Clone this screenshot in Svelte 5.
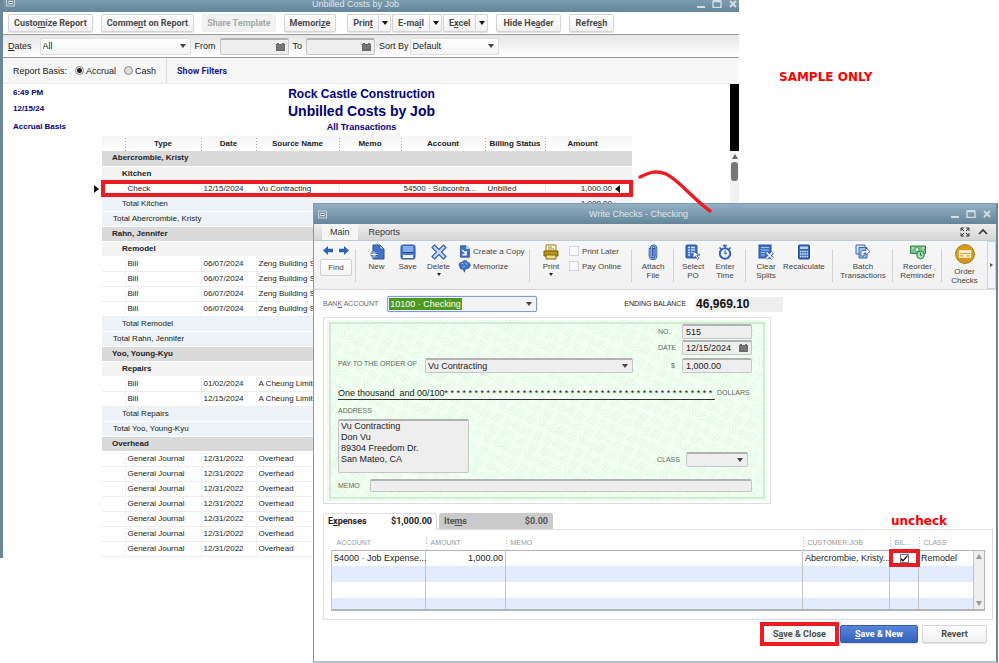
<script lang="ts">
  type Row = {
    kind: 'customer' | 'job' | 'line' | 'jobtotal' | 'total';
    text: string;
    date?: string;
    source?: string;
    account?: string;
    status?: string;
    amount?: string;
    current?: boolean;
  };

  const bill = (date: string, source: string): Row => ({ kind: 'line', text: 'Bill', date, source });
  const journal: Row = { kind: 'line', text: 'General Journal', date: '12/31/2022', source: 'Overhead' };

  const rows: Row[] = [
    { kind: 'customer', text: 'Abercrombie, Kristy' },
    { kind: 'job', text: 'Kitchen' },
    {
      kind: 'line',
      text: 'Check',
      date: '12/15/2024',
      source: 'Vu Contracting',
      account: '54500 · Subcontra...',
      status: 'Unbilled',
      amount: '1,000.00',
      current: true,
    },
    { kind: 'jobtotal', text: 'Total Kitchen', amount: '1,000.00' },
    { kind: 'total', text: 'Total Abercrombie, Kristy' },
    { kind: 'customer', text: 'Rahn, Jennifer' },
    { kind: 'job', text: 'Remodel' },
    bill('06/07/2024', 'Zeng Building Su'),
    bill('06/07/2024', 'Zeng Building Su'),
    bill('06/07/2024', 'Zeng Building Su'),
    bill('06/07/2024', 'Zeng Building Su'),
    { kind: 'jobtotal', text: 'Total Remodel' },
    { kind: 'total', text: 'Total Rahn, Jennifer' },
    { kind: 'customer', text: 'Yoo, Young-Kyu' },
    { kind: 'job', text: 'Repairs' },
    bill('01/02/2024', 'A Cheung Limite'),
    bill('12/15/2024', 'A Cheung Limite'),
    { kind: 'jobtotal', text: 'Total Repairs' },
    { kind: 'total', text: 'Total Yoo, Young-Kyu' },
    { kind: 'customer', text: 'Overhead' },
    ...Array(7).fill(journal),
  ];

  const headers = ['Type', 'Date', 'Source Name', 'Memo', 'Account', 'Billing Status', 'Amount'];

  let basis = $state('accrual');
  let fromDate = $state('');
  let toDate = $state('');
  let checkNo = $state('515');
  let checkDate = $state('12/15/2024');
  let checkAmount = $state('1,000.00');
  let address = $state('Vu Contracting\nDon Vu\n89304 Freedom Dr.\nSan Mateo, CA');
  let memo = $state('');
  let printLater = $state(false);
  let payOnline = $state(false);
  let billable = $state(true);

  const amountInWords = 'One thousand  and 00/100' + '* '.repeat(45).trim();
</script>

<!-- "_" stands before the access key -->
{#snippet key(label: string)}
  {@const i = label.indexOf('_')}
  {#if i < 0}{label}{:else}<span>{label.slice(0, i)}<u>{label[i + 1]}</u>{label.slice(i + 2)}</span>{/if}
{/snippet}

{#snippet calendar()}
  <svg class="cal" viewBox="0 0 9 8" aria-hidden="true">
    <path d="M0 1h1V0h2v1h3V0h2v1h1v7H0z" fill="#6a6a6a" />
    <path d="M1 3h7M1 5h7M3 2v5M6 2v5" stroke="#8c8c8c" stroke-width=".5" />
  </svg>
{/snippet}

{#snippet controls()}
  <div class="controls">
    <button aria-label="Minimize"><svg viewBox="0 0 10 8"><path d="M1 7h8" stroke="#d5dde2" stroke-width="2" /></svg></button>
    <button aria-label="Maximize"><svg viewBox="0 0 10 8"><path d="M1 1.5h8v6H1z" fill="none" stroke="#d5dde2" stroke-width="1.4" /><path d="M1 1h8" stroke="#d5dde2" stroke-width="2" /></svg></button>
    <button aria-label="Close"><svg viewBox="0 0 10 8"><path d="M2 1l6 6M8 1l-6 6" stroke="#d5dde2" stroke-width="2" /></svg></button>
  </div>
{/snippet}

{#snippet sysmenu()}
  <svg class="sysmenu" viewBox="0 0 9 9" aria-hidden="true">
    <rect x=".5" y="1" width="8" height="7" fill="#7d98a9" stroke="#c5d0d7" />
    <path d="M2.500 3h4v3h-4z" fill="#e8eef2" />
    <path d="M3 4.500h3" stroke="#4c6779" />
  </svg>
{/snippet}

{#snippet icon(name: string)}
  <svg class="icon" viewBox="0 0 16 16" aria-hidden="true">
    {#if name === 'new'}
      <path d="M4 1h7l4 4v10H4z" fill="#4273c4" stroke="#2b529c" />
      <path d="M11 1v4h4z" fill="#bcd3f5" stroke="#2b529c" stroke-width=".7" />
      <path d="M5 7v7M1.500 10.500h7M2.500 8l5 5M7.500 8l-5 5" stroke="#2b529c" stroke-width="2" />
      <path d="M5 7v7M1.500 10.500h7M2.500 8l5 5M7.500 8l-5 5" stroke="#dfeaff" stroke-width="1" />
    {:else if name === 'save'}
      <rect x="1" y="1" width="14" height="14" rx="2" fill="#4c80d2" stroke="#2b529c" />
      <path d="M3 2h10v6H3z" fill="#86aeea" />
      <path d="M2 8.500h12" stroke="#244a91" />
      <path d="M3 11h10v3H3z" fill="#eff5ff" />
    {:else if name === 'delete'}
      <path d="M1 3.500L3.500 1 8 5.500 12.500 1 15 3.500 10.500 8l4.500 4.500-2.500 2.500L8 10.500 3.500 15 1 12.500 5.500 8z" fill="#c9dcf6" stroke="#3565b5" stroke-width="1.200" stroke-linejoin="round" />
    {:else if name === 'copy'}
      <path d="M3 1h7l4 4v10H3z" fill="#4273c4" stroke="#2b529c" />
      <path d="M10 1v4h4z" fill="#c6daf7" />
      <path d="M5 6l5 5M10 7.500V12H5.500" stroke="#fff" stroke-width="1.600" fill="none" />
    {:else if name === 'memorize'}
      <path d="M2 8c-2-3 1-6 3-5 1-3 6-3 7 0 3 0 4 4 2 6-1 2-3 2-5 2l-1 4-2-4c-2 1-4-1-4-3z" fill="#3e70c5" stroke="#27498e" stroke-width=".7" />
      <path d="M4 5c1-1 2-1 3 0M8 4c2-1 3 0 3 2M5 8c1 1 3 1 4-1" stroke="#a9c6f3" fill="none" />
    {:else if name === 'print'}
      <path d="M3 1h10v6H3z" fill="#fffbe4" stroke="#9b7d12" />
      <path d="M5 3h4M5 5h6" stroke="#a98d2a" />
      <path d="M1 7h14v5H1z" fill="#b99318" stroke="#7c610a" />
      <path d="M3 11h10v4H3z" fill="#f0dc8c" stroke="#846a12" />
    {:else if name === 'attach'}
      <path d="M5 5v7a3 3 0 0 0 6 0V4a2.200 2.200 0 0 0-4.500 0v7.500a1.200 1.200 0 0 0 2.500 0V5" fill="none" stroke="#2b529c" stroke-width="2.600" stroke-linecap="round" />
      <path d="M5 5v7a3 3 0 0 0 6 0V4a2.200 2.200 0 0 0-4.500 0v7.500a1.200 1.200 0 0 0 2.500 0V5" fill="none" stroke="#86aee8" stroke-width="1.200" />
    {:else if name === 'select'}
      <rect x="1" y="1" width="11" height="13" rx="1" fill="#3f70c4" stroke="#2b529c" />
      <path d="M3 3.500h2M6 3.500h4M3 6h2M6 6h4M3 8.500h2M6 8.500h2M3 11h2" stroke="#c9dcfa" stroke-width="1.300" />
      <path d="M8 7l7 4-3 .5 2 3-1.500 1-2-3L8 14z" fill="#e6effd" stroke="#2b529c" stroke-width=".8" />
    {:else if name === 'timer'}
      <circle cx="8" cy="9.500" r="5.200" fill="#e5effc" stroke="#3263b6" stroke-width="2" />
      <path d="M6 1.500h4M8 1v3M2.500 3.500l2 2M13.500 3.500l-2 2" stroke="#3263b6" stroke-width="1.600" />
      <path d="M8 6.500v3.500l2-1" stroke="#27498e" fill="none" />
    {:else if name === 'clear'}
      <rect x="1" y="1" width="12" height="13" fill="#3f70c4" stroke="#2b529c" />
      <path d="M3 3.500h8M3 6h8M3 8.500h4M3 11h4" stroke="#9dbff0" />
      <path d="M8.500 8.500l6 6M14.500 8.500l-6 6" stroke="#2b529c" stroke-width="3.400" />
      <path d="M8.500 8.500l6 6M14.500 8.500l-6 6" stroke="#dbe8fc" stroke-width="1.800" />
    {:else if name === 'calc'}
      <rect x="2.500" y="1" width="11" height="14" rx="1" fill="#3768bd" stroke="#27498e" />
      <path d="M4 2.500h8v2.500H4z" fill="#b9d1f7" />
      <path d="M4 7.500h8M4 10h8M4 12.500h8" stroke="#dbe8fc" stroke-width="1.500" stroke-dasharray="1.500 .7" />
    {:else if name === 'batch'}
      <path d="M1 1h9v9H1z" fill="#d8e5f8" stroke="#3c68b2" />
      <path d="M4 3.500h8V14H4z" fill="#9dbdec" stroke="#3c68b2" />
      <path d="M6 12V8.500c0-1 1-2 2-2h3V4l4 3.500-4 3.500V9H9v3z" fill="#f3f8ff" stroke="#2b529c" stroke-width=".8" />
    {:else if name === 'reorder'}
      <path d="M.5 2h15v7.500H.5z" fill="#7cc18a" stroke="#2f8745" />
      <circle cx="7" cy="5.500" r="2" fill="#e4f7e7" stroke="#2f8745" stroke-width=".7" />
      <path d="M2 4h2M12 4h2" stroke="#e4f7e7" />
      <circle cx="10.500" cy="11" r="3.800" fill="#a9dab2" stroke="#2f8745" />
      <path d="M10.500 8.800V11l1.500 1" stroke="#1f6731" fill="none" />
    {:else if name === 'order'}
      <circle cx="8" cy="8" r="7.500" fill="#d99a1c" stroke="#a87211" stroke-width=".8" />
      <rect x="3" y="5" width="10" height="6" rx=".6" fill="#fff6dc" />
      <path d="M4 7.500h8M4 9.500h3M9 9.500h3" stroke="#cf9320" stroke-width=".8" />
    {/if}
  </svg>
{/snippet}

{#snippet tool(name: string, lines: string[])}
  <button class="tool">
    {@render icon(name)}
    {#each lines as line}<span>{line}</span>{/each}
  </button>
{/snippet}

<div class="desktop">
  <section class="window report">
    <header class="titlebar">
      {@render sysmenu()}
      <h2>Unbilled Costs by Job</h2>
      {@render controls()}
    </header>

    <div class="buttons">
      <button class="btn">{@render key('Custo_mize Report')}</button>
      <button class="btn">{@render key('Comme_nt on Report')}</button>
      <button class="btn share" disabled>Share Template</button>
      <button class="btn">{@render key('Memori_ze')}</button>
      <div class="menus">
        {#each ['Prin_t', 'E-ma_il', 'E_xcel'] as label}
          <div class="split">
            <button class="btn">{@render key(label)}</button>
            <button class="btn drop" aria-label="More options"><i class="caret"></i></button>
          </div>
        {/each}
      </div>
      <button class="btn wide">{@render key('Hide He_ader')}</button>
      <button class="btn wide">{@render key('Refre_sh')}</button>
    </div>

    <div class="filters">
      <label for="dates">{@render key('_Dates')}</label>
      <div class="pick dates">
        <select id="dates"><option>All</option></select>
        <i class="caret"></i>
      </div>
      <label for="from">From</label>
      <div class="field date"><input id="from" bind:value={fromDate} />{@render calendar()}</div>
      <label for="to">To</label>
      <div class="field date"><input id="to" bind:value={toDate} />{@render calendar()}</div>
      <div class="sort">
        <label for="sort">Sort By</label>
        <div class="pick">
          <select id="sort"><option>Default</option></select>
          <i class="caret"></i>
        </div>
      </div>
    </div>

    <div class="basis">
      <div class="basis-options">
        <span>Report Basis:</span>
        <label><input type="radio" name="basis" value="accrual" bind:group={basis} />Accrual</label>
        <label><input type="radio" name="basis" value="cash" bind:group={basis} />Cash</label>
      </div>
      <a href="#filters">Show Filters</a>
    </div>

    <div class="sheet">
      <div class="paper">
        <div class="heading">
          <div class="stamp">
            <span>6:49 PM</span>
            <span>12/15/24</span>
            <span>Accrual Basis</span>
          </div>
          <div class="titles">
            <h3>Rock Castle Construction</h3>
            <h1>Unbilled Costs by Job</h1>
            <h4>All Transactions</h4>
          </div>
        </div>

        <table class="costs">
          <colgroup>
            <col class="c-indent" /><col class="c-type" /><col class="c-date" /><col class="c-source" />
            <col class="c-memo" /><col class="c-account" /><col class="c-status" /><col />
          </colgroup>
          <thead>
            <tr>
              <th></th>
              {#each headers as header}<th>{header}</th>{/each}
            </tr>
          </thead>
          <tbody>
            {#each rows as row}
              {#if row.kind === 'line'}
                <tr class="line" class:current={row.current}>
                  <td>{#if row.current}<i class="mark start"></i>{/if}</td>
                  <td>{row.text}</td>
                  <td>{row.date}</td>
                  <td>{row.source}</td>
                  <td></td>
                  <td>{row.account}</td>
                  <td>{row.status}</td>
                  <td class="amount">{row.amount}{#if row.current}<i class="mark end"></i>{/if}</td>
                </tr>
              {:else}
                <tr class={row.kind}>
                  <td colspan="7">{row.text}</td>
                  <td class="amount">{row.amount}</td>
                </tr>
              {/if}
            {/each}
          </tbody>
        </table>
      </div>
      <div class="rail">
        <div class="black"></div>
        <i class="up"></i>
        <div class="thumb"></div>
      </div>
    </div>
  </section>

  <section class="window checks">
    <header class="titlebar">
      {@render sysmenu()}
      <h2>Write Checks - Checking</h2>
      {@render controls()}
    </header>

    <nav class="ribbon-tabs">
      <button class="active">Main</button>
      <button>Reports</button>
      <div class="ribbon-actions">
        <button aria-label="Expand">
          <svg viewBox="0 0 10 10"><path d="M1 4V1h3M6 1h3v3M9 6v3H6M4 9H1V6M1 1l3 3M9 1L6 4M9 9L6 6M1 9l3-3" fill="none" stroke="#333" /></svg>
        </button>
        <button aria-label="Collapse">
          <svg viewBox="0 0 10 10"><path d="M1 7l4-4 4 4" fill="none" stroke="#333" stroke-width="1.600" /></svg>
        </button>
      </div>
    </nav>

    <div class="ribbon">
      <div class="group nav">
        <div class="arrows">
          <button aria-label="Previous"><svg viewBox="0 0 10 9"><path d="M0 4.500L5 0v2.800h5v3.400H5V9z" fill="#2f62b8" /></svg></button>
          <button aria-label="Next"><svg viewBox="0 0 10 9"><path d="M10 4.500L5 0v2.800H0v3.400h5V9z" fill="#2f62b8" /></svg></button>
        </div>
        <button class="find">Find</button>
      </div>
      <div class="group edit">
        {@render tool('new', ['New'])}
        {@render tool('save', ['Save'])}
        <button class="tool">{@render icon('delete')}<span>Delete</span><i class="caret"></i></button>
        <div class="stack">
          <button class="inline">{@render icon('copy')}Create a Copy</button>
          <button class="inline">{@render icon('memorize')}Memorize</button>
        </div>
      </div>
      <div class="group print">
        <button class="tool">{@render icon('print')}<span>Print</span><i class="caret"></i></button>
        <div class="stack">
          <label><input type="checkbox" bind:checked={printLater} />Print Later</label>
          <label><input type="checkbox" bind:checked={payOnline} />Pay Online</label>
        </div>
      </div>
      <div class="group attach">{@render tool('attach', ['Attach', 'File'])}</div>
      <div class="group po">
        {@render tool('select', ['Select', 'PO'])}
        {@render tool('timer', ['Enter', 'Time'])}
      </div>
      <div class="group splits">
        {@render tool('clear', ['Clear', 'Splits'])}
        {@render tool('calc', ['Recalculate'])}
      </div>
      <div class="group batch">{@render tool('batch', ['Batch', 'Transactions'])}</div>
      <div class="group reorder">{@render tool('reorder', ['Reorder', 'Reminder'])}</div>
      <div class="group order">{@render tool('order', ['Order', 'Checks'])}</div>
      <button class="more" aria-label="More tools"><i></i></button>
    </div>

    <div class="body">
      <div class="bank">
        <label class="caps" for="bank">{@render key('BAN_K ACCOUNT')}</label>
        <div class="pick account">
          <span class="selected">10100 · Checking</span>
          <select id="bank" aria-label="Bank account"><option label=" "></option></select>
          <i class="caret"></i>
        </div>
        <span class="caps ending">ENDING BALANCE</span>
        <output>46,969.10</output>
      </div>

      <div class="check">
        <div class="check-face">
          <svg class="pattern" aria-hidden="true">
            <defs>
              <pattern id="weave" width="44" height="36" patternUnits="userSpaceOnUse" patternTransform="rotate(24)">
                <rect width="44" height="36" fill="#f0fff0" />
                <path
                  d="M1 9l8-7M2 12l9-8M5 13l7-6M14 2l4 9M17 1l4 10M20 1l3 8M25 10l8-5M25 7l7-5M28 12l8-5M37 1l-2 10M40 1l-2 11M43 2l-2 9M3 17l9 3M2 20l9 3M1 23l9 3M15 24l4-10M18 25l4-10M21 25l3-9M26 16l8 7M28 14l8 7M26 20l6 5M38 23l5-8M36 22l4-8M41 25l3-6M2 35l6-7M5 35l6-8M8 36l5-6M16 28l9 2M15 31l9 2M16 34l9 2M29 35l2-9M32 36l2-9M35 35l2-8M39 28l5 6M38 31l4 4"
                  stroke="#def7e1" fill="none" />
              </pattern>
            </defs>
            <rect width="100%" height="100%" fill="url(#weave)" />
          </svg>

          <div class="check-form">
            <div class="pair no">
              <label class="caps" for="no">NO.</label>
              <div class="field"><input id="no" bind:value={checkNo} /></div>
            </div>
            <div class="pair">
              <label class="caps" for="date">DATE</label>
              <div class="field"><input id="date" bind:value={checkDate} />{@render calendar()}</div>
            </div>
            <div class="payee">
              <label class="caps" for="payee">PAY TO THE ORDER OF</label>
              <div class="pick flat">
                <select id="payee"><option>Vu Contracting</option></select>
                <i class="caret"></i>
              </div>
              <div class="pair">
                <label class="caps dollar" for="amount">$</label>
                <div class="field"><input id="amount" bind:value={checkAmount} /></div>
              </div>
            </div>
            <div class="words">
              <p>{amountInWords}</p>
              <span class="caps">DOLLARS</span>
            </div>
            <label class="caps address-label" for="address">ADDRESS</label>
            <div class="address">
              <textarea id="address" bind:value={address}></textarea>
              <div class="class">
                <label class="caps" for="class">CLASS</label>
                <div class="pick flat">
                  <select id="class"><option label=" "></option></select>
                  <i class="caret"></i>
                </div>
              </div>
            </div>
            <div class="memo">
              <label class="caps" for="memo">MEMO</label>
              <div class="field"><input id="memo" bind:value={memo} /></div>
            </div>
          </div>
        </div>
      </div>

      <div class="detail-tabs">
        <button class="active">{@render key('E_xpenses')}<span>$1,000.00</span></button>
        <button>{@render key('Ite_ms')}<span>$0.00</span></button>
      </div>

      <div class="detail">
        <table>
          <colgroup>
            <col class="d-account" /><col class="d-amount" /><col /><col class="d-customer" />
            <col class="d-bill" /><col class="d-class" /><col class="d-rail" />
          </colgroup>
          <thead>
            <tr>
              {#each ['ACCOUNT', 'AMOUNT', 'MEMO', 'CUSTOMER:JOB', 'BIL...', 'CLASS'] as header}
                <th>{header}</th>
              {/each}
              <th></th>
            </tr>
          </thead>
          <tbody>
            <tr>
              <td>54000 · Job Expense...</td>
              <td class="amount">1,000.00</td>
              <td></td>
              <td>Abercrombie, Kristy...</td>
              <td class="billable"><input type="checkbox" aria-label="Billable" bind:checked={billable} /></td>
              <td>Remodel</td>
              <td class="scroll" rowspan="4"><div><i class="up"></i><i class="down"></i></div></td>
            </tr>
            {#each Array(3) as _}
              <tr>
                {#each Array(6) as _}<td></td>{/each}
              </tr>
            {/each}
          </tbody>
        </table>
      </div>

      <footer>
        <button class="btn boxed">{@render key('S_ave & Close')}</button>
        <button class="btn primary">{@render key('_Save & New')}</button>
        <button class="btn">Revert</button>
      </footer>
    </div>
  </section>

  <p class="note sample">SAMPLE ONLY</p>
  <p class="note uncheck">uncheck</p>
  <svg class="swoosh" viewBox="0 0 80 48" aria-hidden="true">
    <path d="M4 10C14 5 21 3 30 7C43 13 56 31 74 44" fill="none" stroke="#ed1c24" stroke-width="3.500" stroke-linecap="round" />
  </svg>
</div>

<style>
  :global(body) {
    margin: 0;
    background: #fff;
  }

  .desktop {
    position: relative;
    min-height: 100vh;
    overflow: hidden;
    font: 9px/12px 'Liberation Sans', Arial, sans-serif;
    color: #222;
  }

  .desktop * {
    box-sizing: border-box;
  }

  button,
  input,
  select,
  textarea {
    font: inherit;
    color: inherit;
    margin: 0;
    padding: 0;
    border: 0;
    background: none;
    border-radius: 0;
    outline: none;
  }

  select {
    appearance: none;
  }

  h1,
  h2,
  h3,
  h4,
  p {
    margin: 0;
  }

  .window {
    position: absolute;
    background: #fff;
  }

  .report {
    top: 0;
    left: 0;
    right: 260px;
    border-left: 3px solid #6b8799;
  }

  .checks {
    top: 203px;
    left: 313px;
    right: 1px;
    border: 1px solid #7f9bad;
    border-right: 2px solid #6b8799;
    border-bottom: 2px solid #b3c3ce;
  }

  .titlebar {
    display: flex;
    align-items: center;
    height: 20px;
    padding: 0 4px;
    background: linear-gradient(#93b0c3, #64859a);
    color: #dfe8ee;
  }

  .titlebar h2 {
    flex: 1;
    text-align: center;
    font-size: 9px;
    font-weight: 400;
  }

  .report .titlebar {
    align-items: flex-start;
    height: 12px;
    padding: 0 1px 0 3px;
    background: linear-gradient(#7d9cb0, #64859a);
  }

  .report .titlebar h2 {
    line-height: 9px;
  }

  .report .sysmenu {
    margin-top: -2px;
  }

  .sysmenu {
    width: 9px;
    height: 9px;
  }

  .controls {
    display: flex;
    gap: 6px;
  }

  .controls button,
  .controls svg {
    display: block;
    width: 10px;
    height: 8px;
  }

  .caret {
    width: 0;
    height: 0;
    border: 3px solid transparent;
    border-top: 4px solid #444;
    border-bottom: 0;
  }

  .btn {
    height: 18px;
    padding: 0 5px;
    border: 1px solid #d4d4d4;
    border-radius: 2px;
    background: linear-gradient(#fff, #f1f1f1);
    box-shadow: 0 1px 1px #e2e2e2;
    font: bold 9px/14px Roboto, 'Liberation Sans', sans-serif;
    color: #4b4b4b;
    white-space: nowrap;
  }

  .buttons {
    display: flex;
    align-items: center;
    gap: 8px;
    height: 23px;
    padding: 0 5px;
    border-bottom: 1px solid #999;
  }

  .buttons .share {
    padding: 0 4px;
    border-color: #eee;
    background: #f2f2f2;
    box-shadow: none;
    color: #a8a8a8;
  }

  .buttons .wide {
    padding: 0 6px;
  }

  .menus {
    display: flex;
    gap: 1px;
    margin-left: 3px;
  }

  .split {
    display: flex;
  }

  .split .btn:first-child {
    border-radius: 2px 0 0 2px;
    border-right: 0;
  }

  .split .drop {
    width: 13px;
    padding: 0 3px;
    border-radius: 0 2px 2px 0;
  }

  .drop .caret {
    display: block;
    border-top-color: #111;
  }

  .filters {
    display: flex;
    align-items: center;
    gap: 4px;
    height: 23px;
    padding: 0 5px;
    border-bottom: 1px solid #999;
    background: linear-gradient(#e6e6e6, #fff);
  }

  .pick {
    position: relative;
    display: flex;
    align-items: center;
    height: 17px;
    border: 1px solid #ddd;
    border-radius: 2px;
    background: linear-gradient(#fff, #f4f4f4);
  }

  .pick select {
    width: 100%;
    height: 100%;
    padding-left: 2px;
  }

  .pick .caret {
    position: absolute;
    right: 4px;
    pointer-events: none;
  }

  .dates {
    width: 151px;
    margin-left: 4px;
  }

  .sort {
    display: flex;
    align-items: center;
    gap: 1px;
  }

  .sort .pick {
    width: 89px;
  }

  .field {
    display: flex;
    align-items: center;
    height: 15px;
    padding: 0 3px;
    border: 1px solid #c6c6c6;
    border-top: 2px solid #b2b2b2;
    border-radius: 2px;
    background: #eee;
  }

  .field input {
    flex: 1;
    width: 0;
    min-width: 0;
    height: 100%;
  }

  .cal {
    width: 9px;
    height: 8px;
  }

  .date {
    width: 69px;
    height: 17px;
  }

  .basis {
    display: flex;
    align-items: stretch;
    height: 26px;
    border-bottom: 1px solid #eee;
    background: #f7f7f7;
  }

  .basis-options {
    display: flex;
    align-items: center;
    gap: 8px;
    padding: 0 10px;
    border-right: 1px solid #ddd;
  }

  .basis label {
    display: flex;
    align-items: center;
    gap: 2px;
  }

  .basis input {
    appearance: none;
    width: 9px;
    height: 9px;
    border: 1px solid #8a8a8a;
    border-radius: 50%;
    background: #ddd;
  }

  .basis input:checked {
    background: radial-gradient(#222 2px, #eee 3px);
  }

  .basis a {
    align-self: center;
    padding-left: 10px;
    font: bold 9px/12px Roboto, 'Liberation Sans', sans-serif;
    color: #1c1c8c;
    text-decoration: none;
  }

  .sheet {
    display: flex;
    font-size: 8px;
  }

  .paper {
    flex: 1;
    min-width: 0;
    padding-bottom: 1px;
  }

  .heading {
    display: grid;
    grid-template-columns: 1fr auto 1fr;
    height: 52px;
    padding: 3px 20px 0 10px;
    font-weight: bold;
    color: #000080;
  }

  .stamp {
    display: flex;
    flex-direction: column;
    gap: 4px;
  }

  .stamp span:last-child {
    margin-top: 2px;
  }

  .titles {
    text-align: center;
  }

  .titles h3 {
    font-size: 12px;
    line-height: 15px;
  }

  .titles h1 {
    font-size: 14px;
    line-height: 18px;
  }

  .titles h4 {
    font-size: 9px;
    line-height: 14px;
  }

  .costs {
    width: 530px;
    margin-left: 99px;
    table-layout: fixed;
    border-collapse: collapse;
  }

  .c-indent {
    width: 23px;
  }

  .c-type {
    width: 76px;
  }

  .c-date {
    width: 55px;
  }

  .c-source {
    width: 83px;
  }

  .c-memo {
    width: 62px;
  }

  .c-account {
    width: 84px;
  }

  .c-status {
    width: 60px;
  }

  .costs th {
    height: 15px;
    padding: 0;
    background:
      linear-gradient(#aaa 1px, transparent 1px) left 5px / 1px 3px repeat-y,
      linear-gradient(#f4f4f4, #fff);
    font-weight: bold;
    color: #222;
    white-space: nowrap;
  }

  .costs th:first-child {
    background: linear-gradient(#f4f4f4, #fff);
  }

  .costs th:last-child {
    padding-right: 12px;
  }

  .costs td {
    height: 15px;
    padding: 0 2px;
    border-bottom: 1px solid #fff;
    line-height: 12px;
    white-space: nowrap;
  }

  .costs .customer td {
    padding-left: 10px;
    background: #dadada;
    font-weight: bold;
  }

  .costs .job td {
    padding-left: 20px;
    background: #f4f4f4;
    font-weight: bold;
  }

  .costs .jobtotal td {
    padding-left: 20px;
    background: #edf3f7;
  }

  .costs .total td {
    padding-left: 11px;
    background: #edf3f7;
  }

  .costs .line td {
    border-bottom-color: #eee;
  }

  .costs .line td:not(:first-child) {
    border-left: 1px solid #f0f0f0;
  }

  .costs td.amount {
    position: relative;
    padding-right: 20px;
    text-align: right;
  }

  .costs .current {
    position: relative;
    outline: 4px solid #ed1c24;
    outline-offset: -3px;
  }

  .mark {
    position: absolute;
    top: 4px;
    border: 4px solid transparent;
  }

  .mark.start {
    left: -8px;
    border-left: 5px solid #111;
    border-right: 0;
  }

  .mark.end {
    top: 3px;
    right: 12px;
    border-right: 5px solid #111;
    border-left: 0;
  }

  .rail {
    display: flex;
    flex-direction: column;
    align-items: center;
    gap: 3px;
    width: 9px;
    background: #f1f1f1;
  }

  .black {
    width: 100%;
    height: 67px;
    background: #000;
  }

  .up {
    border: 3px solid transparent;
    border-bottom: 5px solid #666;
    border-top: 0;
  }

  .down {
    border: 3px solid transparent;
    border-top: 5px solid #666;
    border-bottom: 0;
  }

  .thumb {
    width: 7px;
    height: 19px;
    border-radius: 3px;
    background: #777;
  }

  .ribbon-tabs {
    display: flex;
    align-items: flex-end;
    height: 17px;
    padding: 0 8px;
    border-bottom: 1px solid #bccbd5;
    background: linear-gradient(#ededed, #d5d5d5);
    color: #333;
  }

  .ribbon-tabs > button {
    height: 16px;
    padding: 0 11px;
  }

  .ribbon-tabs > .active {
    padding: 0 8px;
    border-radius: 2px 2px 0 0;
    background: #f6f6f6;
  }

  .ribbon-actions {
    display: flex;
    align-self: center;
    gap: 8px;
    margin-left: auto;
  }

  .ribbon-actions button,
  .ribbon-actions svg {
    display: block;
    width: 10px;
    height: 10px;
  }

  .ribbon {
    display: flex;
    height: 49px;
    padding-left: 2px;
    border-bottom: 1px solid #d8d8d8;
    background: linear-gradient(#f7f7f7, #f1f1f1);
    font-size: 8px;
    line-height: 9px;
    color: #444;
  }

  .group {
    display: flex;
    align-items: flex-start;
    padding-top: 3px;
    background: linear-gradient(#d2d2d2, #d2d2d2) right center / 1px 33px no-repeat;
  }

  .nav {
    flex-direction: column;
    gap: 4px;
    width: 40px;
    padding: 5px 4px 0;
  }

  .edit {
    width: 174px;
    padding-left: 5px;
  }

  .edit .tool {
    width: 31px;
  }

  .edit .stack {
    margin-left: 4px;
  }

  .print {
    width: 102px;
    padding-left: 6px;
  }

  .print .stack {
    margin-left: 3px;
  }

  .attach {
    justify-content: center;
    width: 42px;
  }

  .po {
    gap: 2px;
    width: 72px;
    padding-left: 4px;
  }

  .splits {
    gap: 2px;
    width: 87px;
    padding-left: 5px;
  }

  .batch {
    justify-content: center;
    width: 60px;
  }

  .reorder {
    justify-content: center;
    width: 49px;
  }

  .order {
    flex: 1;
    justify-content: center;
    background: none;
  }

  .arrows {
    display: flex;
    justify-content: space-around;
    width: 100%;
  }

  .arrows button,
  .arrows svg {
    display: block;
    width: 10px;
    height: 9px;
  }

  .find {
    width: 32px;
    height: 17px;
    border: 1px solid #d0d0d0;
    border-radius: 2px;
    background: linear-gradient(#fff, #f3f3f3);
  }

  .tool {
    display: flex;
    flex-direction: column;
    align-items: center;
    min-width: 30px;
    line-height: 9px;
    white-space: nowrap;
  }

  .icon {
    width: 16px;
    height: 16px;
  }

  .tool .icon {
    margin-bottom: 2px;
  }

  .order .icon {
    width: 20px;
    height: 20px;
    margin-bottom: 3px;
  }

  .tool .caret {
    margin-top: 2px;
    border-width: 3px 2px 0;
    border-top-color: #222;
  }

  .stack {
    display: flex;
    flex-direction: column;
    gap: 1px;
  }

  .inline {
    display: flex;
    align-items: center;
    gap: 2px;
    height: 14px;
    white-space: nowrap;
  }

  .inline .icon {
    width: 13px;
    height: 13px;
  }

  .stack label {
    display: flex;
    align-items: center;
    gap: 3px;
    height: 14px;
    white-space: nowrap;
  }

  .stack input {
    appearance: none;
    width: 10px;
    height: 10px;
    border: 1px solid #cdd3e4;
    background: #f8f9fd;
  }

  .stack input:checked {
    background: #4273c4;
  }

  .more {
    display: flex;
    align-items: center;
    justify-content: center;
    width: 9px;
    border: 1px solid #c5d7e6;
    background: #f2f6fa;
  }

  .more i {
    border: 2px solid transparent;
    border-left: 3px solid #555;
    border-right: 0;
  }

  .body {
    padding: 6px 3px 18px 9px;
  }

  .caps {
    font-size: 7px;
    line-height: 12px;
    color: #666;
    white-space: nowrap;
  }

  .bank {
    display: flex;
    align-items: center;
    height: 16px;
    margin-bottom: 5px;
  }

  .account {
    width: 150px;
    height: 16px;
    margin-left: 9px;
    padding-left: 1px;
    border: 1px solid #7d9fd6;
    background: #f3f3f3;
    box-shadow: 0 0 1px #7d9fd6;
  }

  .selected {
    padding: 0 1px;
    background: #4e9a1e;
    color: #fff;
    white-space: nowrap;
  }

  .account select {
    flex: 1;
    width: 0;
  }

  .ending {
    margin-left: 87px;
    color: #222;
  }

  output {
    width: 88px;
    height: 15px;
    margin-left: 9px;
    padding-left: 1px;
    background: #eee;
    font: bold 12px/15px 'Liberation Sans', Arial, sans-serif;
    color: #111;
  }

  .check {
    width: 448px;
    padding: 2px 3px;
    border: 1px solid #ddd;
  }

  .check-face {
    position: relative;
    padding: 2px;
  }

  .pattern {
    position: absolute;
    inset: 0;
    width: 100%;
    height: 100%;
  }

  .check-form {
    position: relative;
    display: flex;
    flex-direction: column;
    padding: 0 11px 5px 7px;
    border: 2px solid #d3ead5;
  }

  .check-form .caps {
    color: #5f6b60;
  }

  .pair {
    display: grid;
    grid-template-columns: 24px 70px;
    align-self: flex-end;
    align-items: center;
  }

  .pair .dollar {
    padding-left: 13px;
  }

  .no {
    margin-bottom: 1px;
  }

  .flat {
    height: 15px;
    border: 1px solid #c6c6c6;
    border-top: 2px solid #b2b2b2;
    background: #eee;
  }

  .payee {
    display: grid;
    grid-template-columns: 87px 208px 1fr;
    margin-top: 3px;
  }

  .payee .pair {
    justify-self: end;
  }

  .words {
    display: flex;
    gap: 2px;
    margin-top: 14px;
  }

  .words p {
    width: 377px;
    overflow: hidden;
    border-bottom: 1px solid #333;
    white-space: pre;
  }

  .address-label {
    margin-top: 5px;
  }

  .address {
    display: flex;
    align-items: flex-end;
    justify-content: space-between;
    margin-top: 2px;
  }

  textarea {
    width: 131px;
    height: 54px;
    padding: 0 2px;
    border: 1px solid #c6c6c6;
    border-top: 2px solid #b2b2b2;
    border-radius: 2px;
    background: #eee;
    line-height: 11px;
    resize: none;
  }

  .class {
    display: grid;
    grid-template-columns: 29px 62px;
    align-items: center;
    margin: 0 4px 6px 0;
  }

  .memo {
    display: grid;
    grid-template-columns: 32px 1fr;
    align-items: center;
    margin-top: 6px;
  }

  .memo .field {
    height: 13px;
  }

  .detail-tabs {
    display: flex;
    gap: 2px;
    margin-top: 9px;
  }

  .detail-tabs button {
    display: flex;
    justify-content: space-between;
    width: 114px;
    height: 16px;
    padding: 2px 5px;
    border-radius: 3px 3px 0 0;
    background: #cacaca;
    color: #555;
    font: bold 9px/12px Roboto, 'Liberation Sans', sans-serif;
  }

  .detail-tabs .active {
    position: relative;
    height: 17px;
    margin-bottom: -1px;
    padding: 1px 4px;
    border: 1px solid #ddd;
    border-bottom: 0;
    background: #fff;
    color: #222;
  }

  .detail {
    padding: 7px 7px 8px;
    border: 1px solid #ddd;
  }

  .detail table {
    width: 100%;
    table-layout: fixed;
    border-collapse: collapse;
  }

  .d-account {
    width: 94px;
  }

  .d-amount {
    width: 80px;
  }

  .d-customer {
    width: 87px;
  }

  .d-bill {
    width: 29px;
  }

  .d-class {
    width: 55px;
  }

  .d-rail {
    width: 11px;
  }

  .detail th {
    height: 13px;
    padding: 0 0 0 5px;
    font-size: 7px;
    font-weight: 400;
    line-height: 12px;
    text-align: left;
    color: #999;
    background: linear-gradient(#bbb 1px, transparent 1px) left 3px / 1px 3px repeat-y;
  }

  .detail th:first-child,
  .detail th:last-child {
    background: none;
  }

  .detail tbody {
    border: 1px solid #b5b5b5;
    border-bottom-width: 2px;
  }

  .detail td {
    height: 16px;
    padding: 0 2px;
    border-left: 1px solid #c3c3c3;
    line-height: 12px;
    white-space: nowrap;
  }

  .detail tr:last-child td {
    height: 12px;
  }

  .detail tbody tr:nth-child(even) {
    background: #e1edfd;
  }

  .detail td.amount {
    text-align: right;
  }

  .detail td.billable {
    text-align: center;
    outline: 4px solid #ed1c24;
    outline-offset: -3px;
  }

  .billable input {
    appearance: none;
    display: block;
    width: 9px;
    height: 9px;
    margin: 0 auto;
    border: 1px solid #777;
    background: #fff;
  }

  .billable input:checked::before {
    content: '';
    display: block;
    width: 7px;
    height: 7px;
    background: #111;
    clip-path: polygon(0 40%, 35% 70%, 100% 0, 100% 30%, 35% 100%, 0 70%);
  }

  .detail td.scroll {
    padding: 0;
    background: #eee;
  }

  .scroll div {
    display: flex;
    flex-direction: column;
    align-items: center;
    justify-content: space-between;
    height: 52px;
  }

  .scroll .up {
    border-bottom-color: #999;
  }

  .scroll .down {
    border-top-color: #999;
  }

  footer {
    display: flex;
    justify-content: flex-end;
    gap: 4px;
    margin-top: 5px;
    padding-right: 6px;
  }

  footer .btn {
    width: 65px;
    padding: 0;
  }

  footer .boxed {
    width: 73px;
    border-radius: 0;
    outline: 4px solid #ed1c24;
    outline-offset: -1px;
  }

  footer .primary {
    width: 78px;
    border-color: #2f5cb0;
    background: linear-gradient(#5585d9, #3562bb);
    color: #fff;
  }

  .note {
    position: absolute;
    font: bold 12px/14px 'DejaVu Sans', Verdana, sans-serif;
    color: #f00;
  }

  .sample {
    top: 70px;
    left: 779px;
  }

  .uncheck {
    top: 514px;
    right: 52px;
  }

  .swoosh {
    position: absolute;
    top: 167px;
    left: 636px;
    width: 80px;
    height: 48px;
  }
</style>
